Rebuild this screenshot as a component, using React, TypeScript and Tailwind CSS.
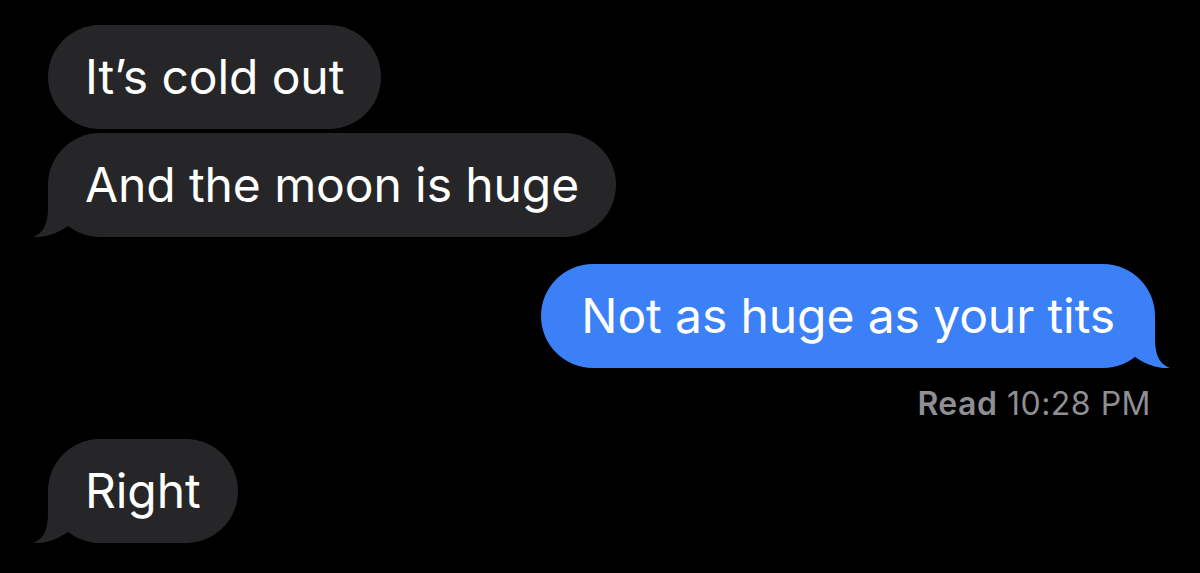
import React from 'react';

const font = { fontFamily: 'Inter, "Noto Sans", sans-serif' };

function Tail({ side, color }: { side: 'left' | 'right'; color: string }) {
  return (
    <svg
      width="60"
      height="52"
      viewBox="0 0 60 52"
      className={
        side === 'left'
          ? 'absolute bottom-0 left-[-15px]'
          : 'absolute bottom-0 right-[-15px] -scale-x-100'
      }
    >
      <path d="M15 0 V22 C15 40 10 48 0 52 C12 53 26 48 36 40 L36 0 Z" fill={color} />
    </svg>
  );
}

function Bubble({
  text,
  side,
  tail,
}: {
  text: string;
  side: 'left' | 'right';
  tail?: boolean;
}) {
  const color = side === 'left' ? '#262628' : '#3b80f6';
  return (
    <div
      className={`relative flex h-[104px] w-fit items-center rounded-[52px] text-[48px] text-white ${
        side === 'left' ? 'bg-[#262628] px-[37px]' : 'self-end bg-[#3b80f6] px-[40px]'
      }`}
    >
      {tail && <Tail side={side} color={color} />}
      <span className="relative tracking-[-0.1px]">{text}</span>
    </div>
  );
}

export default function App() {
  return (
    <div className="h-[573px] w-[1200px] overflow-hidden bg-black" style={font}>
      <div className="flex flex-col pl-[48px] pr-[45px] pt-[25px]">
        <Bubble text="It’s cold out" side="left" />
        <div className="mt-[4px]">
          <Bubble text="And the moon is huge" side="left" tail />
        </div>
        <div className="mt-[27px] flex flex-col">
          <Bubble text="Not as huge as your tits" side="right" tail />
        </div>
        <div className="mt-[19px] self-end pr-[4px] text-[32px] leading-[34px] tracking-[0.5px] text-[#8e8e93]">
          <span className="font-semibold">Read</span> 10:28 PM
        </div>
        <div className="mt-[18px]">
          <Bubble text="Right" side="left" tail />
        </div>
      </div>
    </div>
  );
}
